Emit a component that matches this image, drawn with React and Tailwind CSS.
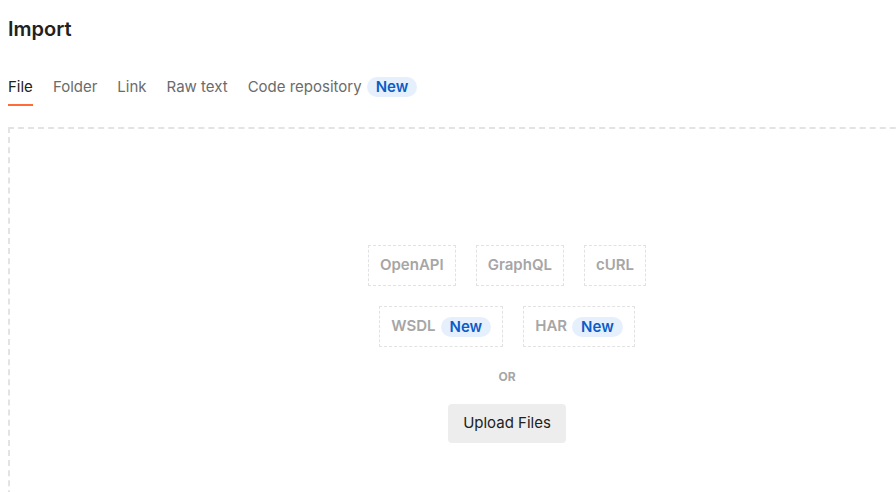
import React from "react";

function Badge() {
  return (
    <span className="ml-[5px] rounded-full bg-[#e6f0fd] px-[9px] py-[1px] text-[15px] font-semibold leading-[18px] text-[#0b5cc7]">
      New
    </span>
  );
}

function Option({ label, isNew }) {
  return (
    <div className="flex h-[41px] items-center border border-dashed border-[#e2e2e2] px-[11px] text-[15px] font-semibold text-[#a6a6a6]">
      {label}
      {isNew && <Badge />}
    </div>
  );
}

export default function App() {
  const tabs = ["File", "Folder", "Link", "Raw text"];

  return (
    <div
      className="h-[492px] w-[896px] overflow-hidden bg-white"
      style={{ fontFamily: "Inter, 'Noto Sans', sans-serif" }}
    >
      <div className="px-2">
        <h1 className="pt-[17px] text-[20px] font-semibold leading-[24px] text-[#212121]">
          Import
        </h1>
        <div className="mt-[36px] flex items-start gap-5 text-[15px] leading-[20px]">
          {tabs.map((t, i) => (
            <div key={t} className="flex flex-col">
              <span className={i === 0 ? "text-[#212121]" : "text-[#6b6b6b]"}>{t}</span>
              <span
                className={
                  "mt-[7px] h-[2px] w-full " + (i === 0 ? "bg-[#ff6c37]" : "bg-transparent")
                }
              />
            </div>
          ))}
          <div className="flex items-center text-[#6b6b6b]">
            Code repository
            <Badge />
          </div>
        </div>
        <div className="mt-[21px] h-[440px] w-[998px] border-2 border-dashed border-[#e3e3e3] pt-[116px]">
          <div className="flex flex-col items-center">
            <div className="flex gap-5">
              <Option label="OpenAPI" />
              <Option label="GraphQL" />
              <Option label="cURL" />
            </div>
            <div className="mt-5 flex gap-5">
              <Option label="WSDL" isNew />
              <Option label="HAR" isNew />
            </div>
            <div className="mt-[21px] text-[12px] font-bold text-[#a6a6a6]">OR</div>
            <button className="mt-[18px] h-[39px] rounded-[4px] bg-[#ededed] px-[15px] text-[15px] text-[#212121]">
              Upload Files
            </button>
          </div>
        </div>
      </div>
    </div>
  );
}
